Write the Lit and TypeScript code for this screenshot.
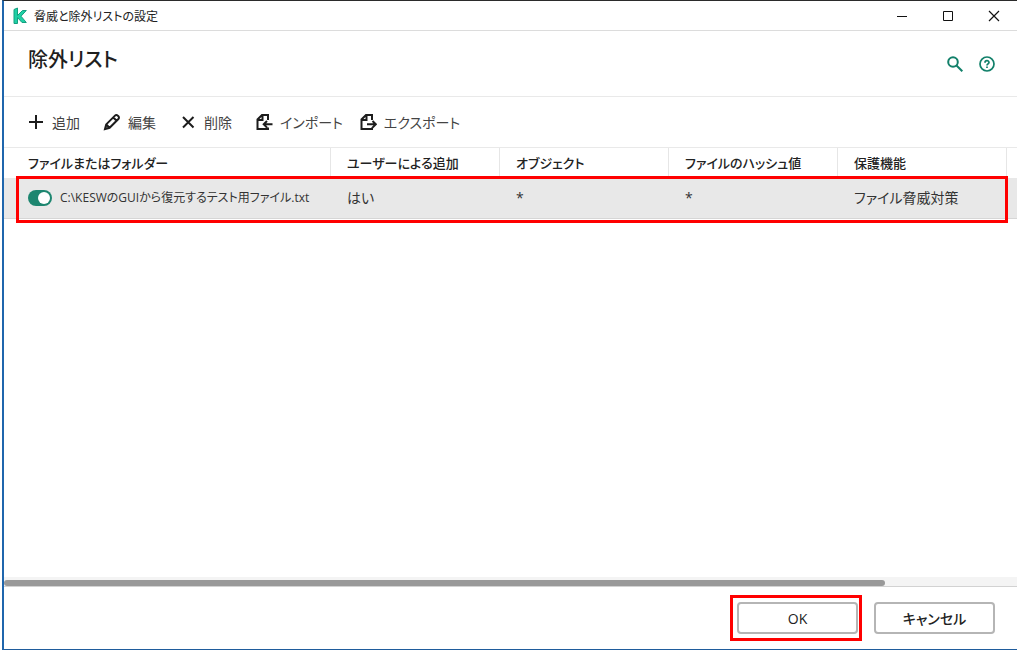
import { LitElement, html, css, svg } from "lit";
import { customElement, state } from "lit/decorators.js";

const icons = {
  add: svg`<path d="M9 2v14M2 9h14" />`,
  edit: svg`<path d="M2 16l1.2-4.6L12 2.6a1.9 1.9 0 0 1 2.7 0l.7.7a1.9 1.9 0 0 1 0 2.7L6.600 14.800zM10.300 4.500l3.300 3.300M3.300 11.500l3.200 3.200" />`,
  remove: svg`<path d="M4 4l10.500 10.500M14.500 4L4 14.500" />`,
  import: svg`<path d="M13 7V2H7L2.500 6.500V16H13v-1.500M7.500 2v5H2.500M17.500 11.300H9M12 8l-3.300 3.300L12 14.600" />`,
  export: svg`<path d="M13 7V2H7L2.500 6.500V16H13v-1.500M7.500 2v5H2.500M8 11.300h8.500M13.500 8l3.300 3.300-3.300 3.300" />`,
};

const actions = [
  { id: "add", label: "追加" },
  { id: "edit", label: "編集" },
  { id: "remove", label: "削除" },
  { id: "import", label: "インポート" },
  { id: "export", label: "エクスポート" },
] as const;

const headings = ["ファイルまたはフォルダー", "ユーザーによる追加", "オブジェクト", "ファイルのハッシュ値", "保護機能"];

@customElement("app-root")
export class AppRoot extends LitElement {
  @state() private enabled = true;

  static styles = css`
    :host {
      display: block;
      font-family: "Open Sans", "Noto Sans CJK JP", sans-serif;
      font-feature-settings: "palt";
      color: #333;
    }
    * {
      box-sizing: border-box;
    }
    button {
      font: inherit;
      font-feature-settings: inherit;
      color: inherit;
      background: none;
      border: 0;
      padding: 0;
      margin: 0;
    }
    svg {
      display: block;
      fill: none;
      stroke: currentColor;
    }
    .frame {
      min-height: 100vh;
      padding-left: 2px;
      display: flex;
    }
    .window {
      flex: 1;
      min-width: 0;
      display: flex;
      flex-direction: column;
      background: #fff;
      border-left: 2px solid #1f66ad;
      border-bottom: 1px solid #1f5c9c;
      border-top: 1px solid #2b2b2b;
    }
    .titlebar {
      display: flex;
      align-items: center;
      height: 30px;
      padding-left: 9px;
      border-bottom: 1px solid #dcdcdc;
      font-size: 12px;
      color: #222;
    }
    .logo {
      width: 14px;
      height: 18px;
      margin-right: 7px;
    }
    .caption {
      flex: 1;
    }
    .winbtn {
      width: 46px;
      height: 29px;
      display: grid;
      place-items: center;
      color: #111;
    }
    .heading {
      display: flex;
      align-items: center;
      height: 66px;
      padding: 0 22px 0 24px;
      border-bottom: 1px solid #e9e9e9;
    }
    h1 {
      flex: 1;
      margin: 0 0 8px;
      font-size: 20px;
      line-height: 28px;
      font-weight: 500;
      color: #1f1f1f;
    }
    .tool {
      color: #12806a;
      margin-left: 16px;
    }
    .toolbar {
      display: flex;
      align-items: center;
      gap: 16px;
      height: 51px;
      padding: 0 23px;
      border-bottom: 1px solid #e9e9e9;
      font-size: 14px;
    }
    .action {
      display: flex;
      align-items: center;
      gap: 7px;
      color: #444;
    }
    .action.wide {
      margin-right: 7px;
    }
    .action svg {
      color: #1d1d1d;
      stroke-width: 2;
    }
    .content {
      flex: 1;
      position: relative;
    }
    table {
      width: 100%;
      table-layout: fixed;
      border-collapse: separate;
      border-spacing: 0;
      font-size: 14px;
      line-height: 20px;
    }
    th,
    td {
      padding: 0 0 0 16px;
      text-align: left;
      white-space: nowrap;
    }
    th {
      height: 30px;
      font-size: 13px;
      font-weight: 500;
      color: #222;
      border-right: 1px solid #e6e6e6;
    }
    th:last-child {
      border-right: 0;
    }
    td {
      height: 41px;
      background: #e8e8e8;
      border-bottom: 1px solid #d6d6d6;
    }
    th:first-child,
    td:first-child {
      padding-left: 24px;
    }
    .c-path {
      width: 327px;
    }
    .c-mid {
      width: 169px;
    }
    .entry {
      display: flex;
      align-items: center;
      gap: 8px;
      font-size: 12px;
    }
    .switch {
      appearance: none;
      width: 24px;
      height: 16px;
      margin: 0;
      padding: 2px;
      border-radius: 8px;
      background: #9a9a9a;
      display: flex;
    }
    .switch::before {
      content: "";
      width: 12px;
      height: 12px;
      border-radius: 50%;
      background: #fff;
    }
    .switch:checked {
      background: #1d8670;
      justify-content: flex-end;
    }
    .rowmark {
      position: absolute;
      left: 12px;
      right: 9px;
      top: 28px;
      height: 47px;
      border: 3px solid #f00;
      pointer-events: none;
    }
    .track {
      height: 10px;
      padding-top: 3px;
      background: #f4f4f4;
      border-bottom: 1px solid #d2d2d2;
    }
    .thumb {
      width: 87%;
      height: 6px;
      border-radius: 3px;
      background: #999;
    }
    .footer {
      display: flex;
      justify-content: flex-end;
      gap: 12px;
      padding: 8px 22px 8px 0;
    }
    .okmark {
      border: 3px solid #f00;
      padding: 4px 1px 4px 4px;
    }
    .footer .push {
      display: block;
      width: 121px;
      height: 32px;
      border: 2px solid #b5b5b5;
      border-radius: 4px;
      background: #fff;
      font-size: 14px;
      font-weight: 500;
      color: #222;
    }
    .footer .cancel {
      margin-top: 7px;
    }
  `;

  private toggle(e: Event) {
    this.enabled = (e.target as HTMLInputElement).checked;
  }

  render() {
    return html`
      <div class="frame">
        <main class="window">
          <header class="titlebar">
            <svg class="logo" viewBox="0 0 14 18" aria-hidden="true">
              <path
                d="M1 2.500L4.500 1v7.500L9.500 3.500H13.300L8 9.200L13.300 15.500H9L4.500 10.500V16.500H1z"
                fill="#1fd0a5"
                stroke="#159f80"
                stroke-width="1"
              />
            </svg>
            <span class="caption">脅威と除外リストの設定</span>
            <button class="winbtn" aria-label="最小化">
              <svg width="12" height="12"><path d="M1 6.500h10" /></svg>
            </button>
            <button class="winbtn" aria-label="最大化">
              <svg width="12" height="12"><path d="M1.500 1.500h9v9h-9z" /></svg>
            </button>
            <button class="winbtn" aria-label="閉じる">
              <svg width="12" height="12"><path d="M1 1l10 10M11 1L1 11" stroke-width="1.200" /></svg>
            </button>
          </header>

          <section class="heading">
            <h1>除外リスト</h1>
            <button class="tool" aria-label="検索">
              <svg width="16" height="16" stroke-width="2">
                <circle cx="6" cy="6" r="4.800" />
                <path d="M9.500 9.500L15.300 15.300" />
              </svg>
            </button>
            <button class="tool" aria-label="ヘルプ">
              <svg width="16" height="16" stroke-width="1.700">
                <circle cx="8" cy="8" r="7" />
                <path d="M6 6.700c0-2.700 4-2.600 4-.2 0 1.400-2 1.500-2 3M8 10.500v1.600" />
              </svg>
            </button>
          </section>

          <nav class="toolbar">
            ${actions.map(
              (a, i) => html`<button class="action ${i < 3 ? "wide" : ""}">
                <svg width="18" height="18" viewBox="0 0 18 18" aria-hidden="true">${icons[a.id]}</svg>
                <span>${a.label}</span>
              </button>`
            )}
          </nav>

          <section class="content">
            <table>
              <colgroup>
                <col class="c-path" />
                <col class="c-mid" />
                <col class="c-mid" />
                <col class="c-mid" />
                <col class="c-mid" />
                <col />
              </colgroup>
              <thead>
                <tr>
                  ${headings.map((h) => html`<th scope="col">${h}</th>`)}
                  <th></th>
                </tr>
              </thead>
              <tbody>
                <tr>
                  <td>
                    <label class="entry">
                      <input class="switch" type="checkbox" role="switch" .checked=${this.enabled} @change=${this.toggle} />
                      <span>C:\\KESWのGUIから復元するテスト用ファイル.txt</span>
                    </label>
                  </td>
                  <td>はい</td>
                  <td>*</td>
                  <td>*</td>
                  <td>ファイル脅威対策</td>
                  <td></td>
                </tr>
              </tbody>
            </table>
            <div class="rowmark"></div>
          </section>

          <div class="track"><div class="thumb"></div></div>

          <footer class="footer">
            <div class="okmark"><button class="push">OK</button></div>
            <button class="push cancel">キャンセル</button>
          </footer>
        </main>
      </div>
    `;
  }
}
